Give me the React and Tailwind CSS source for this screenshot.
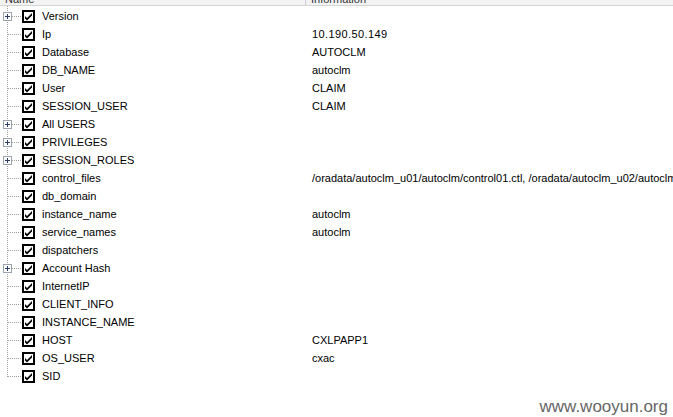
import React from 'react';

const rows = [
  { name: 'Version', plus: true },
  { name: 'Ip', info: '10.190.50.149', spaced: true },
  { name: 'Database', info: 'AUTOCLM' },
  { name: 'DB_NAME', info: 'autoclm' },
  { name: 'User', info: 'CLAIM' },
  { name: 'SESSION_USER', info: 'CLAIM' },
  { name: 'All USERS', plus: true },
  { name: 'PRIVILEGES', plus: true },
  { name: 'SESSION_ROLES', plus: true },
  { name: 'control_files', info: '/oradata/autoclm_u01/autoclm/control01.ctl, /oradata/autoclm_u02/autoclm/control02.ctl' },
  { name: 'db_domain' },
  { name: 'instance_name', info: 'autoclm' },
  { name: 'service_names', info: 'autoclm' },
  { name: 'dispatchers' },
  { name: 'Account Hash', plus: true },
  { name: 'InternetIP' },
  { name: 'CLIENT_INFO' },
  { name: 'INSTANCE_NAME' },
  { name: 'HOST', info: 'CXLPAPP1' },
  { name: 'OS_USER', info: 'cxac' },
  { name: 'SID' },
];

function Check() {
  return (
    <svg width="13" height="13" viewBox="0 0 13 13" className="shrink-0">
      <rect x="0" y="0" width="13" height="13" fill="#000" />
      <rect x="2" y="2" width="9" height="9" fill="#fff" />
      <path d="M3 6 L5 8 L10 3 L10 5.5 L5 10.5 L3 8.5 Z" fill="#000" />
    </svg>
  );
}

function Plus() {
  return (
    <svg width="9" height="9" viewBox="0 0 9 9" className="absolute left-[3px] top-[5px]">
      <rect x="0.5" y="0.5" width="8" height="8" fill="#fff" stroke="#9aa3b0" />
      <path d="M2 4.5 H7 M4.5 2 V7" stroke="#2c3e6a" strokeWidth="1" />
    </svg>
  );
}

export default function App() {
  return (
    <div
      className="relative w-[673px] h-[417px] bg-white overflow-hidden text-[11px] text-black"
      style={{ fontFamily: '"Liberation Sans", Tahoma, sans-serif' }}
    >
      <div className="flex h-[6px] border-b border-[#d5d5d5] bg-[#f3f3f3] overflow-hidden">
        <div className="w-[306px] border-r border-[#d0d0d0] pl-[5px] leading-[1] -mt-[6px] text-[#333]">Name</div>
        <div className="flex-1 pl-[5px] leading-[1] -mt-[6px] text-[#333]">Information</div>
      </div>
      <div className="relative pt-[1px]">
        <div className="absolute left-[7px] top-0 h-[371px] border-l border-dotted border-[#a0a0a0]" />
        {rows.map((r) => (
          <div key={r.name} className="relative flex items-center h-[18px]">
            <div className="absolute left-[8px] top-[9px] w-[13px] border-t border-dotted border-[#a0a0a0]" />
            {r.plus && <Plus />}
            <div className="w-[306px] flex items-center shrink-0 pl-[22px]">
              <Check />
              <span className="ml-[7px] whitespace-nowrap">{r.name}</span>
            </div>
            <div className={`pl-[6px] whitespace-nowrap ${r.spaced ? 'tracking-[0.4px]' : ''}`}>{r.info}</div>
          </div>
        ))}
      </div>
      <div
        className="absolute right-[5px] bottom-[0px] text-[17px] leading-[20px] text-[#666]"
        style={{ fontFamily: '"Liberation Sans", Arial, sans-serif' }}
      >
        www.wooyun.org
      </div>
    </div>
  );
}
